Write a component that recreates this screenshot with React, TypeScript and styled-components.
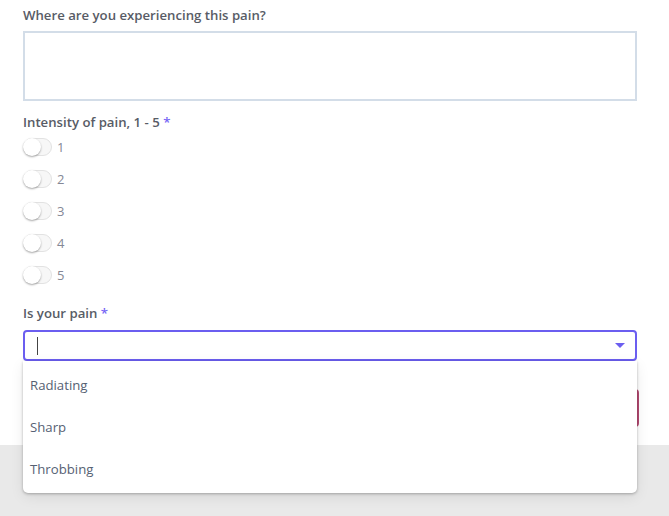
import React from "react";
import styled, { createGlobalStyle } from "styled-components";

const Global = createGlobalStyle`
  html, body { margin: 0; padding: 0; background: #fff; }
  body { font-family: "Open Sans", "Noto Sans", Arial, sans-serif; }
`;

const Page = styled.div`
  width: 669px;
  height: 516px;
  display: flex;
  flex-direction: column;
  background: #e9e9e9;
  overflow: hidden;
`;

const Form = styled.div`
  background: #fff;
  padding: 6px 30px 18px 23px;
  display: flex;
  flex-direction: column;
`;

const Label = styled.div<{ $mt?: number }>`
  font-size: 13.2px;
  line-height: 18px;
  font-weight: 600;
  color: #585c66;
  margin-top: ${(p) => p.$mt ?? 0}px;
`;

const Star = styled.span`
  color: #7565f5;
`;

const TextArea = styled.div`
  margin-top: 7px;
  width: 614px;
  height: 70px;
  box-sizing: border-box;
  border: 2px solid #d3dde8;
`;

const ToggleList = styled.div`
  display: flex;
  flex-direction: column;
`;

const ToggleRow = styled.div`
  height: 32px;
  display: flex;
  align-items: center;
  gap: 5px;
`;

const Track = styled.div`
  position: relative;
  width: 29px;
  height: 18px;
  box-sizing: border-box;
  border: 1px solid #e2e2e2;
  border-radius: 9px;
  background: #f7f7f7;
`;

const Knob = styled.div`
  position: absolute;
  left: -1px;
  top: -1px;
  width: 18px;
  height: 18px;
  border-radius: 50%;
  background: #fff;
  box-shadow: 0 1px 2px rgba(0, 0, 0, 0.35);
`;

const ToggleText = styled.span`
  font-size: 13px;
  color: #858896;
`;

const SelectWrap = styled.div`
  position: relative;
  margin-top: 8px;
  width: 614px;
`;

const SelectBox = styled.div`
  height: 31px;
  box-sizing: border-box;
  border: 2px solid #6b5ef0;
  border-radius: 4px;
  display: flex;
  align-items: center;
  padding: 0 12px;
  justify-content: space-between;
`;

const Caret = styled.span`
  width: 1px;
  height: 18px;
  background: #444;
`;

const Arrow = styled.span`
  width: 0;
  height: 0;
  border-left: 5px solid transparent;
  border-right: 5px solid transparent;
  border-top: 5px solid #6b5ef0;
  margin-right: -2px;
`;

const Menu = styled.div`
  position: absolute;
  top: 31px;
  left: 0;
  right: 0;
  background: #fff;
  border-radius: 0 0 5px 5px;
  box-shadow: 0 1px 3px rgba(0, 0, 0, 0.28), 0 4px 14px rgba(0, 0, 0, 0.08);
  padding: 3px 0;
  z-index: 2;
`;

const Option = styled.div`
  height: 42px;
  display: flex;
  align-items: center;
  padding: 0 7px;
  font-size: 13.2px;
  color: #566173;
`;

const ButtonRow = styled.div`
  display: flex;
  justify-content: flex-end;
  width: 616px;
  margin-top: 28px;
`;

const SubmitButton = styled.div`
  width: 110px;
  height: 38px;
  border-radius: 4px;
  background: #b54a72;
`;

export default function App() {
  return (
    <Page>
      <Global />
      <Form>
        <Label>Where are you experiencing this pain?</Label>
        <TextArea />
        <Label $mt={12}>
          Intensity of pain, 1 - 5 <Star>*</Star>
        </Label>
        <ToggleList>
          {[1, 2, 3, 4, 5].map((n) => (
            <ToggleRow key={n}>
              <Track>
                <Knob />
              </Track>
              <ToggleText>{n}</ToggleText>
            </ToggleRow>
          ))}
        </ToggleList>
        <Label $mt={13}>
          Is your pain <Star>*</Star>
        </Label>
        <SelectWrap>
          <SelectBox>
            <Caret />
            <Arrow />
          </SelectBox>
          <Menu>
            {["Radiating", "Sharp", "Throbbing"].map((o) => (
              <Option key={o}>{o}</Option>
            ))}
          </Menu>
        </SelectWrap>
        <ButtonRow>
          <SubmitButton />
        </ButtonRow>
      </Form>
    </Page>
  );
}
